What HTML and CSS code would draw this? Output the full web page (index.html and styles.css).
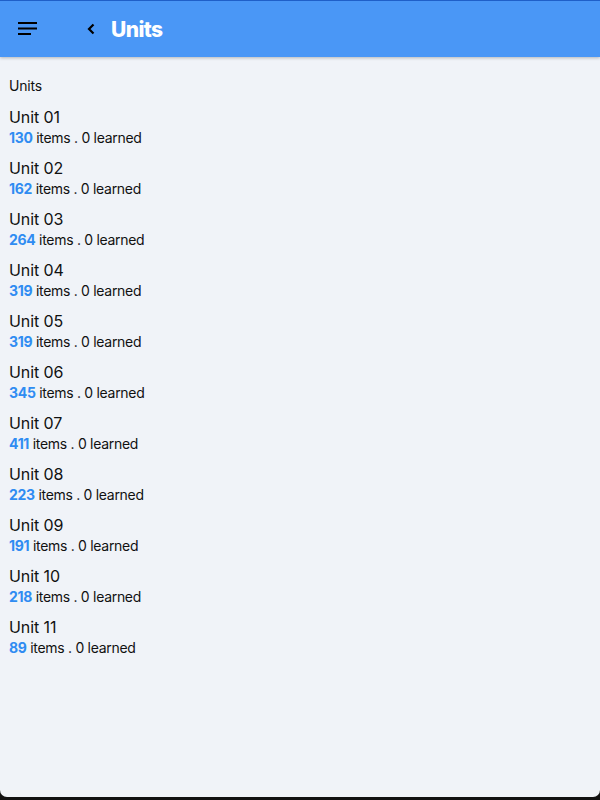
FILE: index.html
```html
<!DOCTYPE html>
<html>
<head>
<meta charset="utf-8">
<link rel="stylesheet" href="styles.css">
</head>
<body>
<div class="screen">
  <header class="appbar">
    <button class="menu" aria-label="menu">
      <svg width="20" height="14" viewBox="0 0 20 14"><rect x="0" y="0" width="19" height="2" fill="#000"/><rect x="0" y="5.5" width="19" height="2" fill="#000"/><rect x="0" y="11" width="13" height="2" fill="#000"/></svg>
    </button>
    <button class="back" aria-label="back">
      <svg width="8" height="12" viewBox="0 0 8 12"><path d="M6.5 1.5 L2 6 L6.5 10.5" fill="none" stroke="#000" stroke-width="2.2"/></svg>
    </button>
    <h1 class="title">Units</h1>
  </header>
  <main class="content">
    <div class="section-label">Units</div>
    <ul class="units">
      <li class="unit"><div class="name">Unit 01</div><div class="meta"><span class="count">130</span> items . 0 learned</div></li>
      <li class="unit"><div class="name">Unit 02</div><div class="meta"><span class="count">162</span> items . 0 learned</div></li>
      <li class="unit"><div class="name">Unit 03</div><div class="meta"><span class="count">264</span> items . 0 learned</div></li>
      <li class="unit"><div class="name">Unit 04</div><div class="meta"><span class="count">319</span> items . 0 learned</div></li>
      <li class="unit"><div class="name">Unit 05</div><div class="meta"><span class="count">319</span> items . 0 learned</div></li>
      <li class="unit"><div class="name">Unit 06</div><div class="meta"><span class="count">345</span> items . 0 learned</div></li>
      <li class="unit"><div class="name">Unit 07</div><div class="meta"><span class="count">411</span> items . 0 learned</div></li>
      <li class="unit"><div class="name">Unit 08</div><div class="meta"><span class="count">223</span> items . 0 learned</div></li>
      <li class="unit"><div class="name">Unit 09</div><div class="meta"><span class="count">191</span> items . 0 learned</div></li>
      <li class="unit"><div class="name">Unit 10</div><div class="meta"><span class="count">218</span> items . 0 learned</div></li>
      <li class="unit"><div class="name">Unit 11</div><div class="meta"><span class="count">89</span> items . 0 learned</div></li>
    </ul>
  </main>
</div>
</body>
</html>
```
FILE: styles.css
```css
html, body {
  margin: 0;
  padding: 0;
  background: #111;
  height: 800px;
  overflow: hidden;
}
.screen {
  height: 797px;
  background: #f0f3f8;
  border-bottom-left-radius: 7px;
  border-bottom-right-radius: 7px;
  overflow: hidden;
  display: flex;
  flex-direction: column;
  font-family: Inter, "Noto Sans", sans-serif;
  color: #111;
}
.appbar {
  height: 57px;
  box-sizing: border-box;
  background: #4a97f6;
  border-top: 1px solid #1f5fc8;
  display: flex;
  align-items: center;
  box-shadow: 0 1px 3px rgba(0,0,0,0.25);
  position: relative;
  z-index: 1;
}
.menu, .back {
  background: none;
  border: 0;
  padding: 0;
  display: flex;
  align-items: center;
  justify-content: center;
}
.menu { margin-left: 18px; width: 20px; height: 20px; }
.back { margin-left: 49px; width: 8px; height: 20px; }
.title {
  margin: 0 0 0 16px;
  font-size: 21px;
  font-weight: 800;
  color: #fff;
  letter-spacing: -0.6px;
}
.content {
  padding: 20px 9px 0;
}
.section-label {
  font-size: 14px;
  line-height: 17px;
  margin-bottom: 13px;
  letter-spacing: -0.2px;
}
.units {
  list-style: none;
  margin: 0;
  padding: 0;
  display: flex;
  flex-direction: column;
  gap: 11px;
}
.unit .name {
  font-size: 16px;
  line-height: 21px;
  letter-spacing: -0.1px;
}
.unit .meta {
  font-size: 14px;
  line-height: 19px;
  letter-spacing: -0.3px;
}
.count {
  color: #2f8cf2;
  font-weight: 700;
}
```
